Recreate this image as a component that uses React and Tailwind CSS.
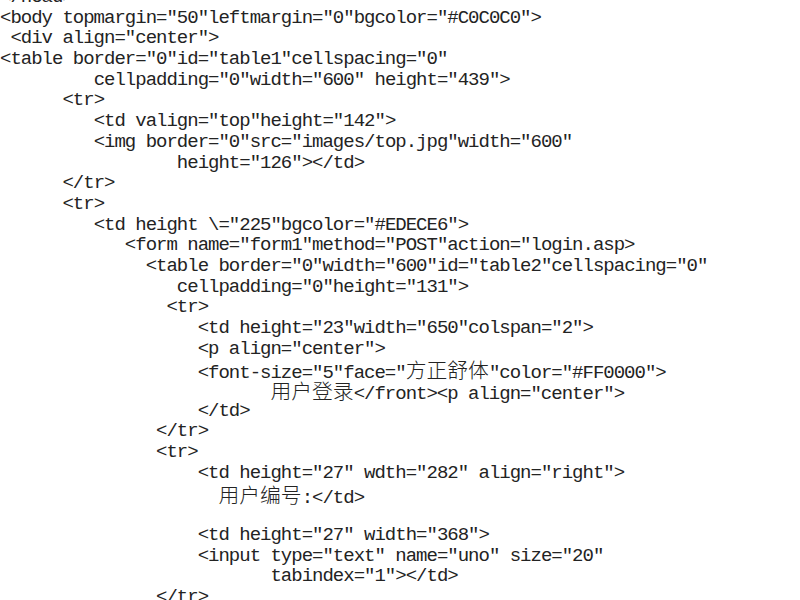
import React from "react";

// indent is counted in half-width cells (10.4px each)
const lines = [
  [0, "</head>"],
  [0, '<body topmargin="50"leftmargin="0"bgcolor="#C0C0C0">'],
  [1, '<div align="center">'],
  [0, '<table border="0"id="table1"cellspacing="0"'],
  [9, 'cellpadding="0"width="600" height="439">'],
  [6, "<tr>"],
  [9, '<td valign="top"height="142">'],
  [9, '<img border="0"src="images/top.jpg"width="600"'],
  [17, 'height="126"></td>'],
  [6, "</tr>"],
  [6, "<tr>"],
  [9, '<td height \\="225"bgcolor="#EDECE6">'],
  [12, '<form name="form1"method="POST"action="login.asp>'],
  [14, '<table border="0"width="600"id="table2"cellspacing="0"'],
  [17, 'cellpadding="0"height="131">'],
  [16, "<tr>"],
  [19, '<td height="23"width="650"colspan="2">'],
  [19, '<p align="center">'],
  [19, '<font-size="5"face="方正舒体"color="#FF0000">'],
  [26, '用户登录</front><p align="center">'],
  [19, "</td>"],
  [15, "</tr>"],
  [15, "<tr>"],
  [19, '<td height="27" wdth="282" align="right">'],
  [21, "用户编号:</td>"],
  [0, ""],
  [19, '<td height="27" width="368">'],
  [19, '<input type="text" name="uno" size="20"'],
  [26, 'tabindex="1"></td>'],
  [15, "</tr>"],
];

const Segments = ({ text }) =>
  text.split(/([\u4e00-\u9fff]+)/).map((part, i) =>
    /[\u4e00-\u9fff]/.test(part) ? (
      <span
        key={i}
        className="text-[20.8px] tracking-normal font-['Noto_Sans_CJK_SC',sans-serif] font-light"
      >
        {part}
      </span>
    ) : (
      <span key={i}>{part}</span>
    )
  );

export default function App() {
  return (
    <div className="w-[800px] h-[600px] overflow-hidden bg-white text-[#232323]">
      <div className="-mt-[13px] font-['Liberation_Mono',monospace] text-[19px] tracking-[-1px]">
        {lines.map(([indent, text], i) => (
          <div key={i} className="h-[20.7px] leading-[20.7px] whitespace-pre">
            {" ".repeat(indent)}
            <Segments text={text} />
          </div>
        ))}
      </div>
    </div>
  );
}
